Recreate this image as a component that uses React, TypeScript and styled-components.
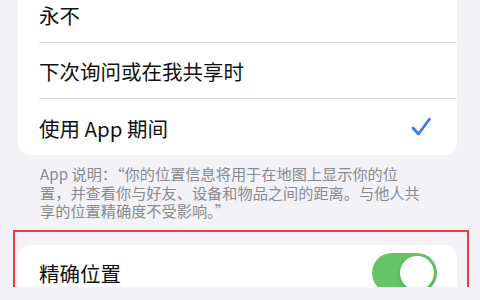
import React from "react";
import styled, { createGlobalStyle } from "styled-components";

const GlobalStyle = createGlobalStyle`
    html, body {
        margin: 0;
        padding: 0;
        background-color: #f2f2f7;
        overflow: hidden;
    }
    body {
        font-family: "Noto Sans CJK SC", "Inter", sans-serif;
        -webkit-font-smoothing: antialiased;
    }
`;

const Page = styled.div`
    width: 480px;
    height: 300px;
    margin-top: -13px;
    display: flex;
    flex-direction: column;
    & > * {
        flex-shrink: 0;
    }
`;

const Card = styled.div`
    margin: 0 23px 0 18px;
    background-color: #ffffff;
    border-radius: 12px;
    overflow: hidden;
`;

const Row = styled.div`
    padding-left: 21px;
`;

const RowInner = styled.div<{ $last?: boolean; $pr?: number }>`
    height: ${(p) => (p.$last ? 56 : 55)}px;
    display: flex;
    align-items: center;
    justify-content: space-between;
    padding-right: ${(p) => p.$pr ?? 26}px;
    border-bottom: ${(p) => (p.$last ? "none" : "1px solid #e1e1e4")};
`;

const Label = styled.span`
    font-size: 20.5px;
    color: #111113;
    line-height: 1;
    padding-top: 2px;
`;

const Footer = styled.div`
    padding: 9px 20px 0 40px;
    font-size: 15.2px;
    color: #8a8a8e;
    white-space: nowrap;
`;

const FooterLine = styled.div`
    height: 18.5px;
    line-height: 18.5px;
`;

const Marked = styled.div`
    margin: 10px 11px 0 13px;
    border: 2px solid #f23c3c;
    border-bottom: none;
    padding: 13px 10px 0 3px;
    flex: 1;
`;

const Toggle = styled.div<{ $on: boolean }>`
    width: 65px;
    height: 40px;
    border-radius: 20px;
    background-color: ${(p) => (p.$on ? "#65c466" : "#e9e9ea")};
    position: relative;
    flex-shrink: 0;
`;

const Knob = styled.div<{ $on: boolean }>`
    position: absolute;
    top: 3px;
    left: ${(p) => (p.$on ? "28px" : "3px")};
    width: 34px;
    height: 34px;
    border-radius: 50%;
    background-color: #ffffff;
    box-shadow: 0 2px 5px rgba(0, 0, 0, 0.15);
`;

const Check = () => (
    <svg width="20" height="20" viewBox="0 0 20 20" fill="none">
        <path
            d="M2 11 L7.5 17 L18.5 2"
            stroke="#3478f6"
            strokeWidth="2.6"
            strokeLinecap="round"
            strokeLinejoin="round"
        />
    </svg>
);

const options = ["永不", "下次询问或在我共享时", "使用 App 期间"];

const footerLines = [
    "App 说明：“你的位置信息将用于在地图上显示你的位",
    "置，并查看你与好友、设备和物品之间的距离。与他人共",
    "享的位置精确度不受影响。”",
];

function App() {
    const selected = 2;
    return (
        <>
            <GlobalStyle />
            <Page>
                <Card>
                    {options.map((opt, i) => (
                        <Row key={opt}>
                            <RowInner $last={i === options.length - 1}>
                                <Label>{opt}</Label>
                                {i === selected && <Check />}
                            </RowInner>
                        </Row>
                    ))}
                </Card>
                <Footer>
                    {footerLines.map((line) => (
                        <FooterLine key={line}>{line}</FooterLine>
                    ))}
                </Footer>
                <Marked>
                    <Card style={{ margin: 0 }}>
                        <Row>
                            <RowInner $last $pr={20}>
                                <Label>精确位置</Label>
                                <Toggle $on>
                                    <Knob $on />
                                </Toggle>
                            </RowInner>
                        </Row>
                    </Card>
                </Marked>
            </Page>
        </>
    );
}

export default App;
